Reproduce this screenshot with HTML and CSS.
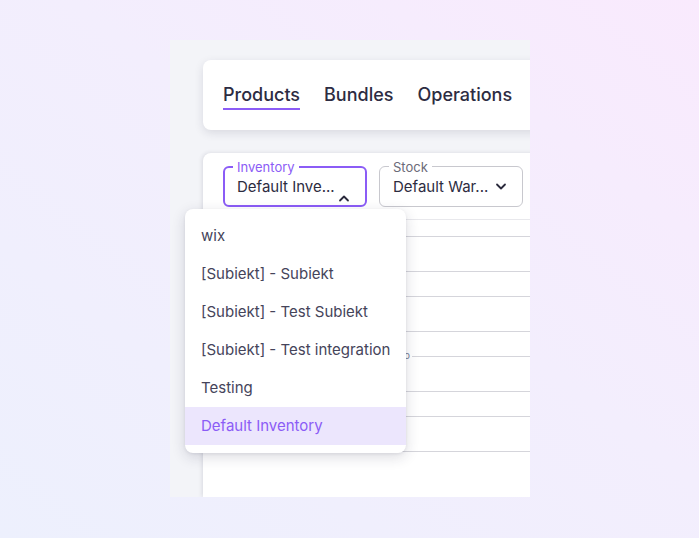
FILE: index.html
```html
<!DOCTYPE html>
<html>
<head>
<meta charset="utf-8">
<link rel="stylesheet" href="styles.css">
</head>
<body>
<div class="stage">
  <div class="panel">
    <div class="card tabs-card">
      <nav class="tabs">
        <span class="tab active">Products</span>
        <span class="tab">Bundles</span>
        <span class="tab">Operations</span>
      </nav>
    </div>
    <div class="card table-card">
      <div class="fields">
        <div class="field focused">
          <span class="field-label">Inventory</span>
          <span class="field-value">Default Inve...</span>
          <svg class="chev chev-up" width="12" height="8" viewBox="0 0 12 8"><path d="M2 6.5 L6 2.5 L10 6.5" fill="none" stroke="#2b2a3c" stroke-width="1.8" stroke-linecap="round" stroke-linejoin="round"/></svg>
        </div>
        <div class="field">
          <span class="field-label">Stock</span>
          <span class="field-value">Default War...</span>
          <svg class="chev chev-down" width="12" height="8" viewBox="0 0 12 8"><path d="M2 1.5 L6 5.5 L10 1.5" fill="none" stroke="#2b2a3c" stroke-width="1.8" stroke-linecap="round" stroke-linejoin="round"/></svg>
        </div>
      </div>
      <div class="lines">
        <div class="ln head"></div>
        <div class="ln row"></div>
        <div class="ln gap"></div>
        <div class="ln row"></div>
        <div class="ln gap split"><span class="tag">o</span><span class="rule"></span></div>
        <div class="ln row"></div>
        <div class="ln gap"></div>
        <div class="ln row"></div>
      </div>
    </div>
    <ul class="menu">
      <li>wix</li>
      <li>[Subiekt] - Subiekt</li>
      <li>[Subiekt] - Test Subiekt</li>
      <li>[Subiekt] - Test integration</li>
      <li>Testing</li>
      <li class="selected">Default Inventory</li>
    </ul>
  </div>
</div>
</body>
</html>
```

FILE: styles.css
```css
* { box-sizing: border-box; }
html, body { margin: 0; height: 100%; }
body {
  font-family: Inter, "Noto Sans", sans-serif;
  background: linear-gradient(to top right, #edf0fd 0%, #f3eefd 55%, #f9eafd 100%);
  width: 699px;
  height: 538px;
  overflow: hidden;
}
.stage { padding: 40px 0 0 170px; }
.panel {
  position: relative;
  width: 360px;
  height: 457px;
  background: #f3f4f8;
  overflow: hidden;
  padding: 20px 0 0 33px;
  display: flex;
  flex-direction: column;
  gap: 23px;
}
.card {
  background: #fff;
  width: 420px;
  flex-shrink: 0;
  border-radius: 8px;
}
.tabs-card {
  height: 70px;
  box-shadow: 0 3px 10px rgba(30, 30, 60, 0.12);
  padding: 23px 0 0 20px;
}
.tabs { display: flex; gap: 24px; }
.tab {
  font-size: 18px;
  font-weight: 500;
  color: #2d2c42;
  line-height: 24px;
  padding-bottom: 1px;
}
.tab.active {
  border-bottom: 2px solid #8b5cf6;
}
.table-card {
  flex: 1;
  border-radius: 8px 8px 0 0;
  box-shadow: -1px 0 4px rgba(30, 30, 60, 0.12);
  padding: 13px 0 0 20px;
}
.fields { display: flex; gap: 12px; }
.field {
  position: relative;
  width: 144px;
  height: 41px;
  border: 1px solid #c8c8ce;
  border-radius: 6px;
  padding: 0 0 0 13px;
}
.field.focused {
  border: 2px solid #8b5cf6;
  padding-left: 12px;
}
.field-label {
  position: absolute;
  top: -8px;
  left: 9px;
  padding: 0 4px;
  background: #fff;
  font-size: 13px;
  line-height: 16px;
  color: #6b6a78;
}
.focused .field-label { top: -9px; left: 8px; color: #8b5cf6; }
.field-value {
  display: block;
  margin-top: 10px;
  font-size: 15px;
  line-height: 20px;
  color: #2d2c3f;
}
.focused .field-value { margin-top: 9px; }
.chev { position: absolute; }
.chev-up { right: 15px; bottom: 3px; }
.chev-down { right: 15px; top: 16px; }
.lines { margin-top: 12px; }
.ln { border-bottom: 1px solid #d5d5db; }
.ln.head { height: 18px; border-top: 1px solid #e8e8ec; }
.ln.row { height: 35px; }
.ln.gap { height: 25px; }
.ln.split {
  border-bottom: none;
  display: flex;
  align-items: flex-end;
}
.tag {
  width: 187px;
  text-align: right;
  font-size: 10px;
  line-height: 10px;
  color: #7a8196;
  margin-bottom: -3px;
}
.rule { flex: 1; border-bottom: 1px solid #d5d5db; margin-left: 2px; }
.menu {
  position: absolute;
  left: 15px;
  top: 169px;
  width: 221px;
  margin: 0;
  padding: 8px 0;
  list-style: none;
  background: #fff;
  border-radius: 8px;
  box-shadow: 0 4px 14px rgba(30, 30, 60, 0.16), 0 1px 3px rgba(30, 30, 60, 0.08);
}
.menu li {
  height: 38px;
  line-height: 38px;
  padding-left: 16px;
  font-size: 15px;
  color: #45445a;
  white-space: nowrap;
}
.menu li.selected {
  background: #ece6fd;
  color: #8b5cf6;
}
```
